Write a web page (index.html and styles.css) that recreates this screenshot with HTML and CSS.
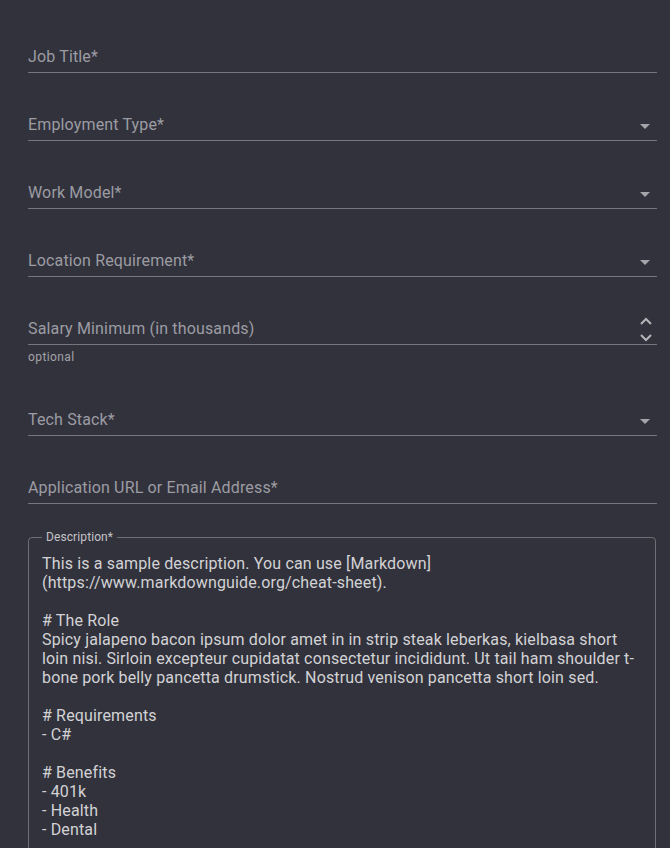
FILE: index.html
```html
<!DOCTYPE html>
<html>
<head>
<meta charset="utf-8">
<link rel="stylesheet" href="styles.css">
</head>
<body>
<form class="form">
  <div class="field"><div class="row"><span class="label">Job Title*</span></div></div>
  <div class="field"><div class="row"><span class="label">Employment Type*</span><svg class="caret" viewBox="0 0 24 24" width="24" height="24"><path d="M7 10l5 5 5-5z"/></svg></div></div>
  <div class="field"><div class="row"><span class="label">Work Model*</span><svg class="caret" viewBox="0 0 24 24" width="24" height="24"><path d="M7 10l5 5 5-5z"/></svg></div></div>
  <div class="field"><div class="row"><span class="label">Location Requirement*</span><svg class="caret" viewBox="0 0 24 24" width="24" height="24"><path d="M7 10l5 5 5-5z"/></svg></div></div>
  <div class="field with-helper"><div class="row"><span class="label">Salary Minimum (in thousands)</span><svg class="spin" viewBox="0 0 14 26" width="14" height="26"><path d="M2 8l5-5 5 5M2 19l5 5 5-5"/></svg></div><div class="helper">optional</div></div>
  <div class="field"><div class="row"><span class="label">Tech Stack*</span><svg class="caret" viewBox="0 0 24 24" width="24" height="24"><path d="M7 10l5 5 5-5z"/></svg></div></div>
  <div class="field last"><div class="row"><span class="label">Application URL or Email Address*</span></div></div>
  <fieldset class="desc">
    <legend class="legend">Description*</legend>
    <div class="desc-text">This is a sample description. You can use [Markdown](https://www.markdownguide.org/cheat-sheet).

# The Role
Spicy jalapeno bacon ipsum dolor amet in in strip steak leberkas, kielbasa short loin nisi. Sirloin excepteur cupidatat consectetur incididunt. Ut tail ham shoulder t-bone pork belly pancetta drumstick. Nostrud venison pancetta short loin sed.

# Requirements
- C#

# Benefits
- 401k
- Health
- Dental</div>
  </fieldset>
</form>
</body>
</html>
```
FILE: styles.css
```css
html, body {
  margin: 0;
  padding: 0;
  background: #32323c;
  height: 100%;
  overflow: hidden;
}
body {
  font-family: Roboto, "Liberation Sans", sans-serif;
  letter-spacing: 0.15px;
}
.form {
  width: 629px;
  margin-left: 28px;
  padding-top: 40px;
}
.field {
  margin-bottom: 35px;
}
.field.with-helper {
  margin-bottom: 37px;
}
.field.last {
  margin-bottom: 26px;
}
.row {
  height: 32px;
  border-bottom: 1px solid #76767e;
  display: flex;
  align-items: center;
  justify-content: space-between;
}
.label {
  color: #9c9ca3;
  font-size: 16px;
  line-height: 32px;
  padding-top: 2px;
}
.caret {
  fill: #a4a4aa;
  margin-top: 3px;
}
.spin {
  fill: none;
  stroke: #b4b4b9;
  stroke-width: 2;
  margin-right: 4px;
  margin-top: 2px;
}
.helper {
  color: #a2a2a8;
  font-size: 12px;
  line-height: 17px;
  margin-top: 4px;
  letter-spacing: 0.4px;
}
.desc {
  margin: 0;
  width: 628px;
  box-sizing: border-box;
  border: 1px solid #6e6e76;
  border-radius: 4px;
  padding: 10px 13px 40px 13px;
  min-height: 400px;
}
.legend {
  color: #c4c4c8;
  font-size: 12px;
  line-height: 14px;
  padding: 0 4px;
  letter-spacing: 0.1px;
}
.desc-text {
  color: #d2d2d5;
  font-size: 16px;
  line-height: 19px;
  white-space: pre-wrap;
  width: 600px;
}
```
